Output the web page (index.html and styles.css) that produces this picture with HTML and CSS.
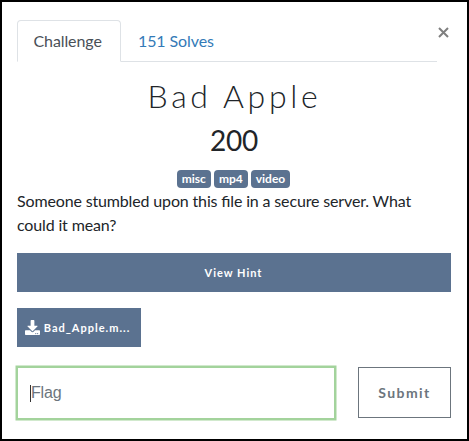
FILE: index.html
```html
<!DOCTYPE html>
<html lang="en">
<head>
<meta charset="utf-8">
<title>Bad Apple</title>
<link rel="stylesheet" href="styles.css">
</head>
<body>
<main class="modal">
  <header class="head">
    <nav class="tabs">
      <a class="tab active">Challenge</a>
      <a class="tab">151 Solves</a>
    </nav>
    <button class="close" aria-label="Close"><svg width="11" height="11" viewBox="0 0 11 11"><path d="M1 1L10 10M10 1L1 10" stroke="#7f7f7f" stroke-width="2" fill="none"/></svg></button>
  </header>
  <h2 class="name">Bad Apple</h2>
  <h3 class="value">200</h3>
  <div class="tags"><span class="badge">misc</span><span class="badge">mp4</span><span class="badge">video</span></div>
  <p class="desc">Someone stumbled upon this file in a secure server. What could it mean?</p>
  <button class="btn hint">View Hint</button>
  <button class="btn file"><svg class="icon" width="15" height="15" viewBox="0 0 512 512"><path fill="#fff" d="M216 0h80c13 0 24 11 24 24v168h88c18 0 27 21 14 34L270 378c-8 8-20 8-28 0L90 226c-13-13-4-34 14-34h88V24c0-13 11-24 24-24zm296 376v112c0 13-11 24-24 24H24c-13 0-24-11-24-24V376c0-13 11-24 24-24h147l49 49c20 20 52 20 72 0l49-49h147c13 0 24 11 24 24zM388 464a20 20 0 1 0-40 0 20 20 0 0 0 40 0zm64 0a20 20 0 1 0-40 0 20 20 0 0 0 40 0z"/></svg><span>Bad_Apple.m...</span></button>
  <div class="answer">
    <div class="field"><span class="caret"></span><span class="placeholder">Flag</span></div>
    <button class="submit">Submit</button>
  </div>
</main>
</body>
</html>
```
FILE: styles.css
```css
* { box-sizing: border-box; }
body { margin: 0; font: 16px/24px Lato, sans-serif; color: #212529; }
button { font-family: inherit; margin: 0; border-radius: 0; }
.modal {
  display: flex;
  flex-direction: column;
  width: 469px;
  height: 441px;
  padding: 18px 16px 0 15px;
  border: 2px solid #000;
  background: #fff;
}
.head { display: flex; height: 42px; }
.tabs { display: flex; width: 420px; border-bottom: 1px solid #dee2e6; }
.tab { height: 42px; padding: 8px 16px; border: 1px solid transparent; color: #337ab7; letter-spacing: -0.1px; }
.tab.active {
  width: 104px;
  padding-left: 15.5px;
  border-color: #dee2e6 #dee2e6 #fff;
  border-radius: 4px 4px 0 0;
  background: #fff;
  color: #495057;
}
.close { display: flex; margin-top: 7px; margin-left: 1px; padding: 0; border: 0; background: none; height: 11px; }
.name {
  margin: 15px 0 0;
  font-size: 32px;
  line-height: 38px;
  font-weight: 300;
  letter-spacing: 3.7px;
  text-indent: 1px;
  text-align: center;
}
.value { margin: 8px 0 0; font-size: 28px; line-height: 34px; font-weight: 400; text-align: center; letter-spacing: -0.3px; }
.tags { display: flex; justify-content: center; gap: 3px; margin-top: 13px; padding-right: 1px; }
.badge {
  height: 18px;
  padding: 0 5px;
  border-radius: 4px;
  background: #5b7290;
  color: #fff;
  font-size: 12px;
  line-height: 18px;
  font-weight: 700;
}
.desc { margin: 1px 0 0; letter-spacing: -0.15px; font-feature-settings: "liga" 1; }
.btn {
  display: flex;
  align-items: center;
  justify-content: center;
  height: 39px;
  padding: 0 1px 0 0;
  border: 0;
  background: #5b7290;
  color: #fff;
  font-size: 11px;
  font-weight: 700;
  letter-spacing: 1px;
  flex: none;
}
.hint { margin-top: 16px; }
.file { width: 124px; margin-top: 16px; padding-right: 3px; gap: 4px; }
.answer { display: flex; justify-content: space-between; margin-top: 20px; }
.field {
  display: flex;
  align-items: center;
  width: 318px;
  height: 52px;
  padding-left: 12px;
  border: 1px solid #a3d39c;
  box-shadow: 0 0 0 1.5px #a3d39c;
}
.caret { width: 1px; height: 17px; background: #333; }
.placeholder { font: 16px/24px "Liberation Sans", sans-serif; color: #6c757d; letter-spacing: -0.2px; }
.submit {
  width: 93px;
  height: 51px;
  padding: 0;
  border: 1px solid #6c757d;
  background: #fff;
  color: #6c757d;
  font-size: 14px;
  font-weight: 700;
  letter-spacing: 1.4px;
}
```
